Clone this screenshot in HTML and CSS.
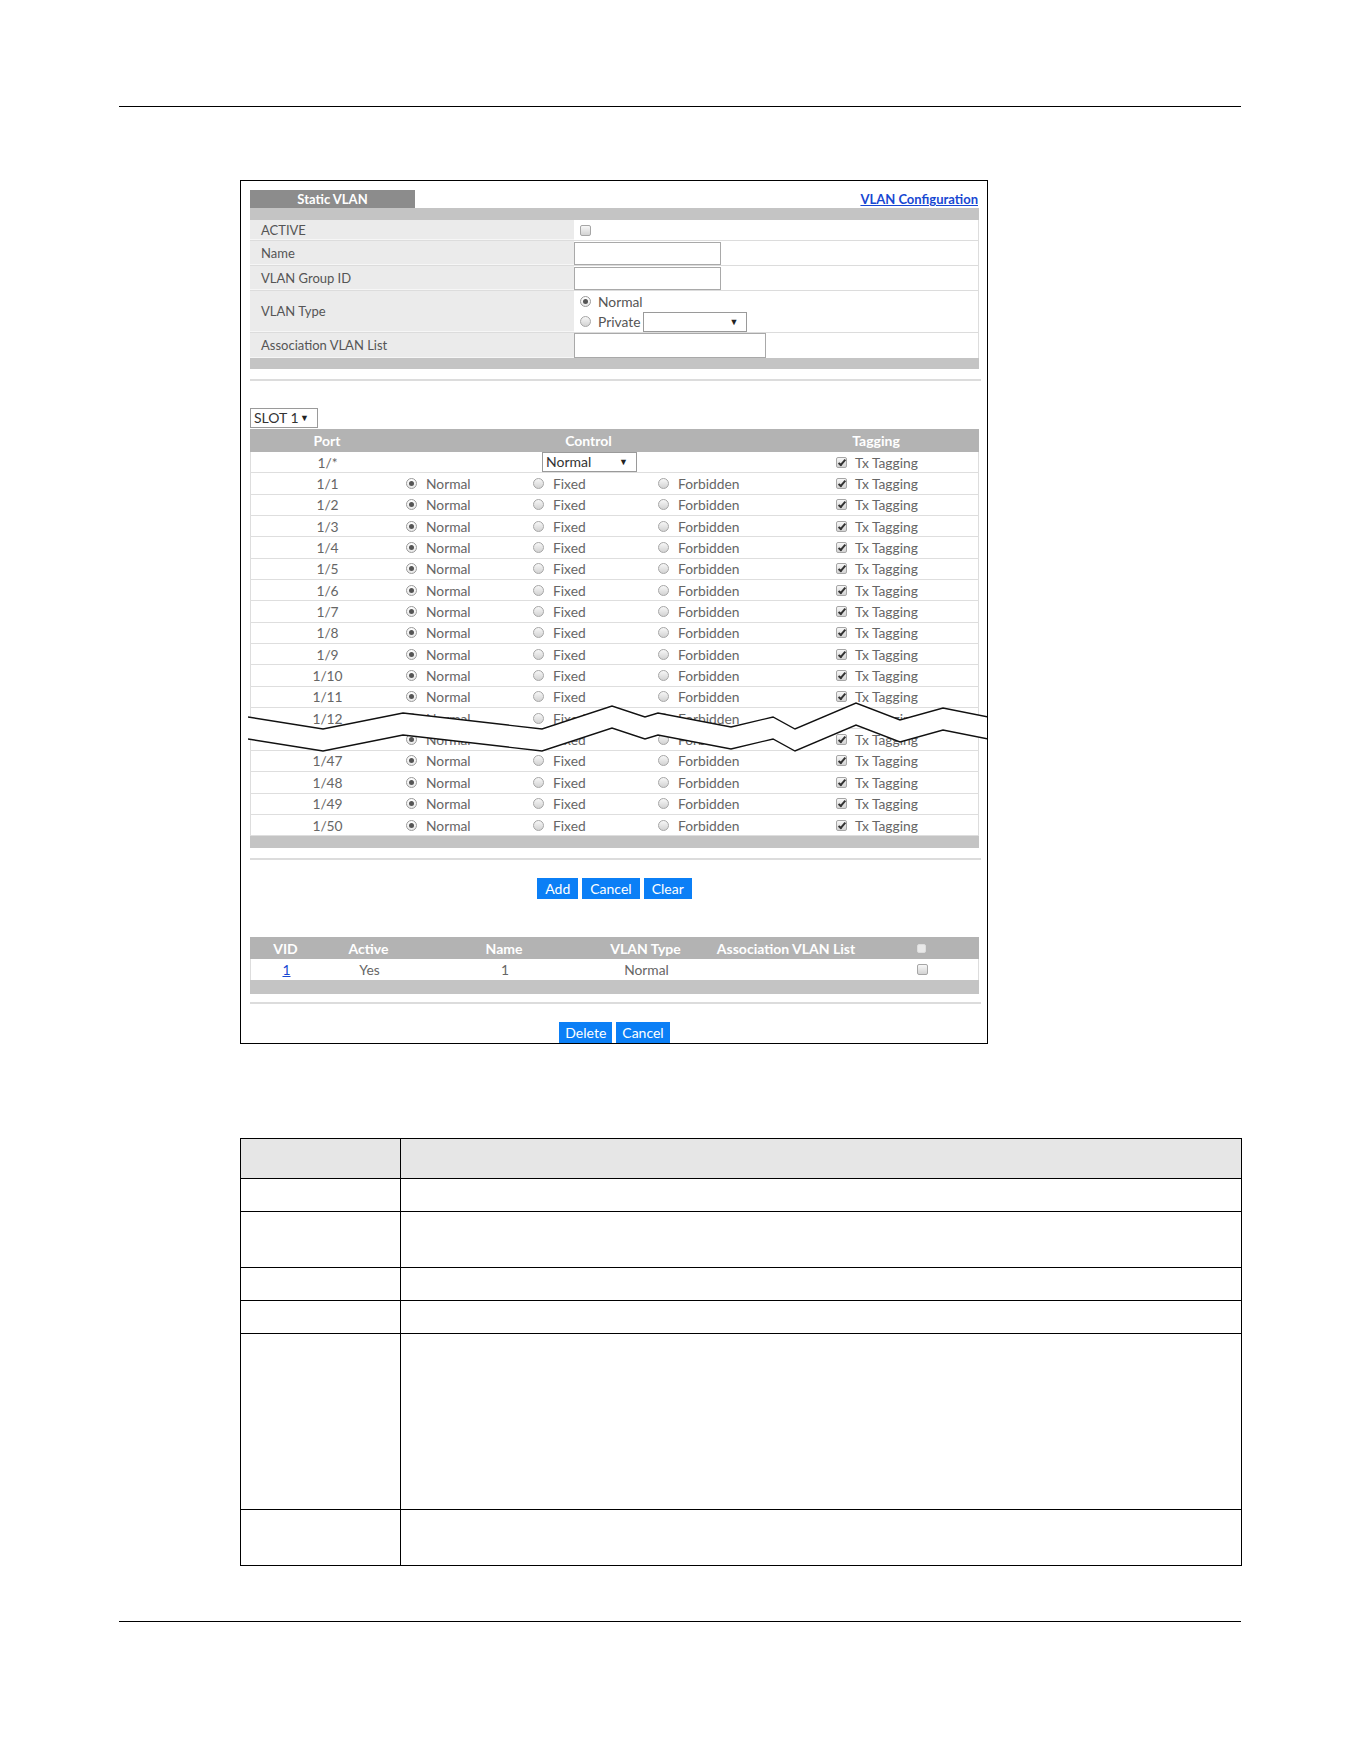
FILE: index.html
```html
<!DOCTYPE html>
<html lang="en">
<head>
  <meta charset="UTF-8" />
  <title>Static VLAN</title>
  <link rel="stylesheet" href="styles.css">
</head>
<body>

  <div class="rule top-rule"></div>

  <div class="panel">
    <div class="tabbar">
      <div class="tab">Static VLAN</div>
      <a class="cfg-link" href="#">VLAN Configuration</a>
    </div>
    <div class="bar"></div>

    <div class="form">
      <div class="frow r-active">
        <div class="flabel">ACTIVE</div>
        <div class="fval"><span class="cb"></span></div>
      </div>
      <div class="frow r-text">
        <div class="flabel">Name</div>
        <div class="fval"><div class="tbox"></div></div>
      </div>
      <div class="frow r-text">
        <div class="flabel">VLAN Group ID</div>
        <div class="fval"><div class="tbox"></div></div>
      </div>
      <div class="frow r-type">
        <div class="flabel">VLAN Type</div>
        <div class="fval type-opts">
          <div class="topt"><span class="radio on"></span>Normal</div>
          <div class="topt"><span class="radio"></span>Private<div class="sel sel-private"><span class="arrow">▼</span></div></div>
        </div>
      </div>
      <div class="frow r-text last">
        <div class="flabel">Association VLAN List</div>
        <div class="fval"><div class="tbox tbox-wide"></div></div>
      </div>
    </div>
    <div class="bar bar-form"></div>

    <div class="sep sep-first"></div>

    <div class="sel sel-slot">SLOT 1<span class="arrow">▼</span></div>

    <div class="ports">
      <div class="phead">
        <div>Port</div>
        <div>Control</div>
        <div>Tagging</div>
      </div>
      <div class="prow">
        <div class="port">1/*</div>
        <div class="ctl ctl-all"><div class="sel sel-ctl">Normal<span class="arrow">▼</span></div></div>
        <div class="tag"><span class="cb on"></span>Tx Tagging</div>
      </div>
      <div id="portRows"></div>
    </div>
    <div class="bar"></div>

    <div class="sep"></div>

    <div class="buttons buttons-add">
      <button>Add</button>
      <button>Cancel</button>
      <button>Clear</button>
    </div>

    <div class="list">
      <div class="lrow lhead">
        <div>VID</div>
        <div>Active</div>
        <div>Name</div>
        <div>VLAN Type</div>
        <div>Association VLAN List</div>
        <div><span class="cb cb-head"></span></div>
        <div></div>
      </div>
      <div class="lrow ldata">
        <div><a href="#" class="vid-link">1</a></div>
        <div>Yes</div>
        <div>1</div>
        <div>Normal</div>
        <div></div>
        <div><span class="cb"></span></div>
        <div></div>
      </div>
    </div>
    <div class="bar bar-list"></div>

    <div class="sep sep-list"></div>

    <div class="buttons buttons-del">
      <button>Delete</button>
      <button>Cancel</button>
    </div>

    <!-- break marks: ports 1/13 to 1/45 are left out of the list -->
    <svg class="cut" width="740" height="60" viewBox="0 0 740 60">
      <polygon fill="#fff" points="0,17 75,29 155,13 294,29 364,6 397,17 410,13 483,27 525,17 547,29 608,3 652,20 695,8 740,17 740,39 695,30 652,42 608,25 547,51 525,39 483,49 410,35 397,39 364,28 294,51 155,35 75,51 0,39" />
      <polyline fill="none" stroke="#111" stroke-width="1.4" points="0,17 75,29 155,13 294,29 364,6 397,17 410,13 483,27 525,17 547,29 608,3 652,20 695,8 740,17" />
      <polyline fill="none" stroke="#111" stroke-width="1.4" points="0,39 75,51 155,35 294,51 364,28 397,39 410,35 483,49 525,39 547,51 608,25 652,42 695,30 740,39" />
    </svg>
  </div>

  <table class="doc">
    <tr class="h"><td class="c1"></td><td></td></tr>
    <tr class="r33"><td class="c1"></td><td></td></tr>
    <tr class="r56"><td class="c1"></td><td></td></tr>
    <tr class="r33"><td class="c1"></td><td></td></tr>
    <tr class="r33"><td class="c1"></td><td></td></tr>
    <tr class="r176"><td class="c1"></td><td></td></tr>
    <tr class="r56"><td class="c1"></td><td></td></tr>
  </table>

  <div class="rule bottom-rule"></div>
  <div class="page-edge"></div>

  <script>
    // ports shown in the list: 1/1 - 1/12 and 1/46 - 1/50
    const ports = [];
    for (let i = 1; i <= 12; i++) ports.push('1/' + i);
    for (let i = 46; i <= 50; i++) ports.push('1/' + i);

    const holder = document.getElementById('portRows');
    ports.forEach(p => {
      const row = document.createElement('div');
      row.className = 'prow';
      row.innerHTML =
        '<div class="port">' + p + '</div>' +
        '<div class="ctl">' +
          '<div class="opt"><span class="radio on"></span>Normal</div>' +
          '<div class="opt"><span class="radio"></span>Fixed</div>' +
          '<div class="opt"><span class="radio"></span>Forbidden</div>' +
        '</div>' +
        '<div class="tag"><span class="cb on"></span>Tx Tagging</div>';
      holder.appendChild(row);
    });
  </script>

</body>
</html>
```

FILE: styles.css
```css
body {
  margin: 0;
  background: #fff;
  font-family: Lato, "Liberation Sans", sans-serif;
  color: #555;
}
.rule {
  height: 1px;
  width: 1122px;
  margin-left: 119px;
  background: #000;
}
.top-rule {
  margin-top: 106px;
}
.bottom-rule {
  margin-top: 55px;
}
.page-edge {
  margin-top: 139px;
  width: 1194px;
  height: 1px;
  background: #111;
}

/* main panel */
.panel {
  position: relative;
  box-sizing: border-box;
  width: 748px;
  height: 864px;
  margin: 73px 0 0 240px;
  padding: 9px 8px 0 9px;
  border: 1px solid #000;
  overflow: hidden;
  font-size: 13px;
}
.tabbar {
  display: flex;
  justify-content: space-between;
  align-items: center;
  height: 18px;
}
.tab {
  width: 165px;
  height: 18px;
  line-height: 18px;
  background: #8c8c8c;
  color: #fff;
  font-weight: bold;
  text-align: center;
}
.cfg-link {
  margin-right: 1px;
  color: #1747d2;
  font-weight: bold;
  text-decoration: underline;
}
.bar {
  height: 12px;
  background: #c4c4c4;
}
.bar-form {
  height: 11px;
}
.bar-list {
  height: 14px;
}
.sep {
  height: 2px;
  margin: 10px -2px 0 0;
  background: #dcdcdc;
}
.sep-list {
  margin-top: 8px;
}

/* form */
.form {
  border-right: 1px solid #ddd;
}
.frow {
  display: grid;
  grid-template-columns: 324px 1fr;
  box-sizing: border-box;
  border-bottom: 1px solid #dcdcdc;
}
.frow.last {
  border-bottom: none;
}
.r-active { height: 21px; }
.r-text { height: 25px; }
.r-type { height: 42px; }
.flabel {
  display: flex;
  align-items: center;
  padding-left: 11px;
  background: #ebebeb;
  color: #555;
  border-bottom: 1px solid #f6f6f6;
}
.fval {
  display: flex;
  align-items: center;
  padding-left: 6px;
}
.r-text .fval {
  align-items: flex-start;
  padding-left: 0;
}
.tbox {
  box-sizing: border-box;
  width: 147px;
  height: 23px;
  margin-top: 1px;
  border: 1px solid #a9a9a9;
  background: #fff;
}
.last .tbox {
  height: 25px;
  margin-top: 0;
}
.tbox-wide {
  width: 192px;
}
.type-opts {
  flex-direction: column;
  align-items: flex-start;
  justify-content: center;
}
.topt {
  display: flex;
  align-items: center;
  height: 20px;
  color: #555;
  font-size: 13.8px;
}
.topt .radio {
  margin-right: 7px;
}

/* drop-down boxes */
.sel {
  position: relative;
  box-sizing: border-box;
  height: 20px;
  line-height: 18px;
  border: 1px solid #9a9a9a;
  background: #fff;
  color: #333;
  font-size: 14px;
}
.sel .arrow {
  position: absolute;
  right: 8px;
  top: 0;
  font-size: 9px;
  color: #222;
}
.sel-private {
  width: 104px;
  margin-left: 3px;
}
.sel-slot {
  width: 68px;
  margin-top: 27px;
  padding-left: 3px;
}
.sel-ctl {
  width: 95px;
  padding-left: 3px;
}

/* inputs drawn as boxes */
.radio,
.cb {
  position: relative;
  display: inline-block;
  flex: none;
  box-sizing: border-box;
  width: 11px;
  height: 11px;
  border: 1px solid #a6a6a6;
  background: linear-gradient(#f7f7f7, #d3d3d3);
}
.radio {
  border-radius: 50%;
}
.radio.on {
  background: linear-gradient(#fff, #e8e8e8);
  border-color: #9a9a9a;
}
.radio.on::after {
  content: "";
  position: absolute;
  left: 2px;
  top: 2px;
  width: 5px;
  height: 5px;
  border-radius: 50%;
  background: #555;
}
.cb {
  border-radius: 2px;
}
.cb.on::after {
  content: "";
  position: absolute;
  left: 3px;
  top: 0;
  width: 2px;
  height: 6px;
  border: solid #333;
  border-width: 0 2px 2px 0;
  transform: rotate(40deg);
}
.cb-head {
  width: 9px;
  height: 9px;
  border-color: #ddd;
  background: #e9e9e9;
}

/* port table */
.ports {
  margin-top: 1px;
}
.phead {
  display: grid;
  grid-template-columns: 154px 369px 1fr;
  height: 23px;
  line-height: 23px;
  background: #b3b3b3;
  color: #fff;
  font-weight: bold;
  font-size: 14px;
  text-align: center;
}
.prow {
  display: grid;
  grid-template-columns: 154px 369px 1fr;
  align-items: center;
  box-sizing: border-box;
  height: 21.35px;
  border-left: 1px solid #ddd;
  border-right: 1px solid #ddd;
  border-bottom: 1px solid #dedede;
  color: #666;
  font-size: 13.8px;
}
.port {
  text-align: center;
  margin-left: -1px;
}
.ctl {
  display: grid;
  grid-template-columns: 127px 125px auto;
  padding-left: 1px;
}
.ctl-all {
  display: flex;
  justify-content: center;
  padding-left: 0;
}
.opt,
.tag {
  display: flex;
  align-items: center;
}
.opt .radio {
  margin-right: 9px;
}
.tag {
  padding-left: 62px;
}
.tag .cb {
  margin-right: 8px;
}
.cut {
  position: absolute;
  left: 7px;
  top: 519px;
}

/* buttons */
.buttons {
  display: flex;
  justify-content: center;
  gap: 4px;
  margin-top: 18px;
}
.buttons button {
  height: 21px;
  padding: 0 8px;
  border: none;
  background: #0b7ff6;
  color: #fff;
  font-family: Lato, "Liberation Sans", sans-serif;
  font-size: 14px;
}
.buttons-del button {
  padding: 0 6px;
}

/* VLAN list */
.list {
  margin-top: 38px;
}
.lrow {
  display: grid;
  grid-template-columns: 71px 95px 176px 107px 174px 97px 1fr;
  align-items: center;
  text-align: center;
}
.lrow > div {
  display: flex;
  justify-content: center;
}
.lhead {
  height: 22px;
  background: #b3b3b3;
  color: #fff;
  font-weight: bold;
  font-size: 14px;
}
.ldata {
  box-sizing: border-box;
  height: 21px;
  border-left: 1px solid #ddd;
  border-right: 1px solid #ddd;
  color: #666;
  font-size: 13.8px;
}
.vid-link {
  color: #1747d2;
}

/* description table */
.doc {
  margin: 94px 0 0 240px;
  width: 1002px;
  border-collapse: collapse;
}
.doc td {
  border: 1px solid #000;
  padding: 0;
}
.doc .c1 {
  width: 159px;
}
.doc .h td {
  background: #e6e6e6;
  height: 39px;
}
.doc .r33 td { height: 32px; }
.doc .r56 td { height: 55px; }
.doc .r176 td { height: 175px; }
```
